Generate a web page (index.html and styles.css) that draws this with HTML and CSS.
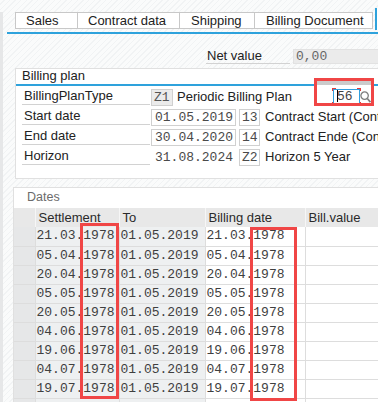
FILE: index.html
```html
<!DOCTYPE html>
<html>
<head>
	<title>Billing Plan</title>
	<link rel="stylesheet" href="styles.css">
</head>
<body>
	<div class="screen">
		<div class="tabs">
			<div class="tab tab-sales">Sales</div>
			<div class="tab tab-contract">Contract data</div>
			<div class="tab tab-ship">Shipping</div>
			<div class="tab tab-bill">Billing Document</div>
			<div class="tab tab-active"></div>
		</div>
		<div class="tab-line"></div>

		<div class="net-row">
			<span class="lbl net-lbl">Net value</span>
			<span class="fld fld-ro net-fld">0,00</span>
		</div>

		<section class="group plan">
			<div class="group-title">Billing plan</div>
			<div class="form-row">
				<span class="lbl">BillingPlanType</span>
				<span class="fld fld-ro fld-key">Z1</span>
				<span class="txt txt-type">Periodic Billing Plan</span>
				<span class="fld fld-focus"><span class="caret"></span>56</span>
				<svg class="search" width="11" height="12" viewBox="0 0 11 12">
					<circle cx="4.6" cy="4.6" r="3.7" fill="none" stroke="#7d7d7d" stroke-width="1.3"/>
					<line x1="7.3" y1="7.5" x2="10.4" y2="11.2" stroke="#7d7d7d" stroke-width="1.7"/>
				</svg>
			</div>
			<div class="form-row">
				<span class="lbl">Start date</span>
				<span class="fld fld-date">01.05.2019</span>
				<span class="fld fld-code">13</span>
				<span class="txt txt-desc">Contract Start (Contract)</span>
			</div>
			<div class="form-row">
				<span class="lbl">End date</span>
				<span class="fld fld-date">30.04.2020</span>
				<span class="fld fld-code">14</span>
				<span class="txt txt-desc">Contract Ende (Contract)</span>
			</div>
			<div class="form-row">
				<span class="lbl">Horizon</span>
				<span class="fld fld-date fld-plain">31.08.2024</span>
				<span class="fld fld-code">Z2</span>
				<span class="txt txt-desc">Horizon 5 Year</span>
			</div>
			<div class="mark mark-plan"></div>
		</section>

		<section class="group dates">
			<div class="dates-title">Dates</div>
			<table class="grid">
				<colgroup>
					<col class="c-sel">
					<col class="c-settle">
					<col class="c-to">
					<col class="c-bill">
					<col class="c-value">
				</colgroup>
				<thead>
					<tr><th></th><th>Settlement</th><th>To</th><th>Billing date</th><th>Bill.value</th></tr>
				</thead>
				<tbody>
					<tr><td class="sel"></td><td class="ro">21.03.1978</td><td class="ro">01.05.2019</td><td>21.03.1978</td><td></td></tr>
					<tr><td class="sel"></td><td class="ro">05.04.1978</td><td class="ro">01.05.2019</td><td>05.04.1978</td><td></td></tr>
					<tr><td class="sel"></td><td class="ro">20.04.1978</td><td class="ro">01.05.2019</td><td>20.04.1978</td><td></td></tr>
					<tr><td class="sel"></td><td class="ro">05.05.1978</td><td class="ro">01.05.2019</td><td>05.05.1978</td><td></td></tr>
					<tr><td class="sel"></td><td class="ro">20.05.1978</td><td class="ro">01.05.2019</td><td>20.05.1978</td><td></td></tr>
					<tr><td class="sel"></td><td class="ro">04.06.1978</td><td class="ro">01.05.2019</td><td>04.06.1978</td><td></td></tr>
					<tr><td class="sel"></td><td class="ro">19.06.1978</td><td class="ro">01.05.2019</td><td>19.06.1978</td><td></td></tr>
					<tr><td class="sel"></td><td class="ro">04.07.1978</td><td class="ro">01.05.2019</td><td>04.07.1978</td><td></td></tr>
					<tr><td class="sel"></td><td class="ro">19.07.1978</td><td class="ro">01.05.2019</td><td>19.07.1978</td><td></td></tr>
					<tr><td class="sel"></td><td class="ro"></td><td class="ro"></td><td></td><td></td></tr>
				</tbody>
			</table>
			<div class="mark mark-settle"></div>
			<div class="mark mark-billdate"></div>
		</section>
	</div>
</body>
</html>
```

FILE: styles.css
```css
body {
	margin: 0;
	width: 378px;
	height: 402px;
	overflow: hidden;
	font: 13px "Liberation Sans", Arial, sans-serif;
	color: #222;
	background: repeating-linear-gradient(-45deg, #f1f3f4 0 1px, #fafbfb 1px 4px);
}
.screen {
	width: 440px;
	height: 402px;
	box-sizing: border-box;
	border-left: 3px solid #e6e7e8;
}

/* tab strip */
.tabs {
	display: flex;
	margin: 12px 0 0 12px;
	height: 17px;
}
.tab {
	box-sizing: border-box;
	height: 17px;
	border: 1px solid #c8c8c8;
	border-left: none;
	background: #fff;
	line-height: 15px;
	padding-left: 10px;
	white-space: nowrap;
}
.tab-sales {
	width: 63px;
	border-left: 1px solid #c8c8c8;
}
.tab-contract { width: 102px; }
.tab-ship { width: 75px; padding-left: 11px; }
.tab-bill { width: 118px; padding-left: 11px; }
.tab-active {
	width: 40px;
	height: 22px;
	margin: -4px 0 0 2px;
	border: none;
	border-left: 2px solid #2ea2dc;
}
.tab-line {
	margin: 3px 0 0 4px;
	height: 2px;
	background: #2ea2dc;
}

/* fields */
.lbl {
	box-sizing: border-box;
	width: 128px;
	height: 17px;
	border-bottom: 1px solid #d2d2d2;
	line-height: 16px;
	padding-left: 2px;
	white-space: nowrap;
}
.fld {
	box-sizing: border-box;
	height: 17px;
	margin: 1px 0 0 1px;
	padding: 0 3px;
	border: 1px solid #d0d0d0;
	background: #fff;
	font: 13px "Liberation Mono", "Courier New", monospace;
	line-height: 15px;
	color: #4a4a4a;
	white-space: nowrap;
}
.fld-ro {
	background: #ebebeb;
}
.txt {
	margin-left: 4px;
	line-height: 17px;
	white-space: nowrap;
}

.net-row {
	display: flex;
	margin: 14px 0 0 203px;
	height: 16px;
}
.net-lbl {
	width: 84px;
	height: 16px;
	line-height: 15px;
	padding-left: 1px;
}
.net-fld {
	width: 120px;
	height: 15px;
	margin: 1px 0 0 3px;
	padding-left: 2px;
	line-height: 13px;
	border-color: #e2e2e2;
	color: #666;
}

/* groups */
.group {
	position: relative;
	background: #fff;
	border: 1px solid #e0e0e0;
}
.plan {
	margin: 4px 0 0 12px;
	padding: 0 0 10px 6px;
}
.group-title {
	margin: 0 0 2px -6px;
	padding-left: 6px;
	height: 15px;
	line-height: 14px;
	border-bottom: 2px solid #2ea2dc;
}
.form-row {
	display: flex;
	align-items: flex-start;
	height: 20px;
}
.fld-key {
	width: 22px;
	padding: 0 2px;
	color: #555;
}
.txt-type {
	width: 156px;
}
.fld-focus {
	position: relative;
	width: 27px;
	height: 15px;
	margin: 1px 0 0 0;
	padding: 0 0 0 3px;
	line-height: 13px;
	border-color: #2f9fe0;
	color: #444;
}
.fld-focus::after {
	content: "";
	position: absolute;
	inset: -2px;
	background:
		linear-gradient(#e03a3a, #e03a3a) left top / 4px 1px no-repeat,
		linear-gradient(#e03a3a, #e03a3a) right top / 4px 1px no-repeat,
		linear-gradient(#e03a3a, #e03a3a) left bottom / 4px 1px no-repeat,
		linear-gradient(#e03a3a, #e03a3a) right bottom / 4px 1px no-repeat,
		linear-gradient(#e03a3a, #e03a3a) left top / 1px 3px no-repeat,
		linear-gradient(#e03a3a, #e03a3a) right top / 1px 3px no-repeat,
		linear-gradient(#e03a3a, #e03a3a) left bottom / 1px 3px no-repeat,
		linear-gradient(#e03a3a, #e03a3a) right bottom / 1px 3px no-repeat;
}
.caret {
	display: inline-block;
	width: 1px;
	height: 12px;
	margin-right: -1px;
	vertical-align: -2px;
	background: #000;
}
.search {
	margin: 3px 0 0 0;
}
.fld-date {
	width: 85px;
}
.fld-plain {
	border-color: transparent;
	background: transparent;
}
.fld-code {
	width: 21px;
	margin-left: 3px;
	padding: 0 2px;
}
.txt-desc {
	margin-left: 5px;
}

/* annotation boxes */
.mark {
	position: absolute;
	box-sizing: border-box;
	border: 3px solid #f04646;
	pointer-events: none;
}
.mark-plan {
	left: 298px;
	top: 9px;
	width: 60px;
	height: 28px;
	background: linear-gradient(#cbcbcb 0 4px, #fff 4px 7px, transparent 7px);
}
.mark-settle {
	left: 66px;
	top: 35px;
	width: 39px;
	height: 176px;
}
.mark-billdate {
	left: 236px;
	top: 39px;
	width: 47px;
	height: 174px;
}

/* dates table */
.dates {
	margin: 8px 0 0 10px;
}
.dates-title {
	height: 20px;
	line-height: 18px;
	padding-left: 13px;
	font-size: 12.5px;
	color: #6b6b6b;
}
.grid {
	border-collapse: collapse;
	table-layout: fixed;
	width: 400px;
}
.c-sel { width: 21px; }
.c-settle { width: 84px; }
.c-to { width: 86px; }
.c-bill { width: 100px; }
.c-value { width: 109px; }
.grid th {
	height: 19px;
	box-sizing: border-box;
	padding: 0 0 0 3px;
	background: #e8e8e8;
	border-right: 1px solid #f6f6f6;
	text-align: left;
	font-weight: normal;
	line-height: 18px;
	color: #2a2a2a;
	white-space: nowrap;
}
.grid td {
	height: 19px;
	box-sizing: border-box;
	padding: 0 0 0 1px;
	border: 1px solid #dddddd;
	border-top: none;
	font: 13px "Liberation Mono", "Courier New", monospace;
	line-height: 18px;
	color: #3f3f3f;
	background: #fff;
	white-space: nowrap;
	overflow: hidden;
}
.grid td.ro {
	background: #eef0f1;
}
.grid td.sel {
	background: #e6e7e8;
	border-left: none;
}
```
